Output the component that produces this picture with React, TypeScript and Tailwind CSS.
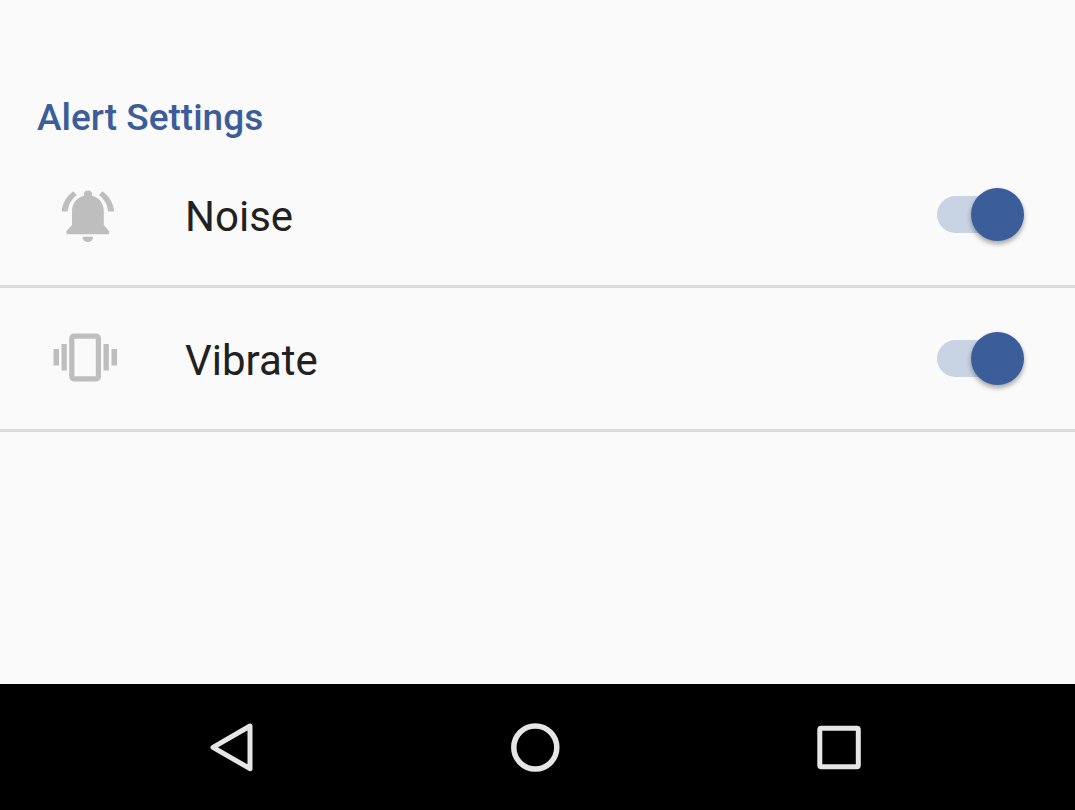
import { useState, type ReactNode } from "react";

function BellIcon() {
  return (
    <svg className="h-16 w-16 shrink-0" viewBox="0 1 64 64" fill="#bebebe" aria-hidden="true">
      <path d="M35 8.500a4 4 0 0 0-4 4v1.300C23.900 15.600 19 21.500 19 29V43L13.400 49.300V52.200H56.200V49.300L50.800 43V29C50.800 21.500 46.100 15.600 39 13.800V12.500a4 4 0 0 0-4-4z" />
      <path d="M29.500 54.700H40.200A5.350 5.350 0 0 1 29.500 54.700z" />
      <path d="M20.200 9.200 24 13C18.600 17 15.200 22.600 14.700 29.600H8.700C9.200 21.500 13.600 13.900 20.200 9.200z" />
      <path d="M49.600 9.200 45.800 13C51.200 17 54.600 22.600 55.100 29.600H61.100C60.600 21.500 56.200 13.900 49.600 9.200z" />
    </svg>
  );
}

function VibrateIcon() {
  return (
    <svg className="h-16 w-16 shrink-0" viewBox="0 0 64 64" fill="#bebebe" aria-hidden="true">
      <rect x="0.500" y="22" width="5.500" height="16.500" />
      <rect x="8.500" y="17" width="5.300" height="26.500" />
      <rect x="50.500" y="17" width="5.300" height="26.500" />
      <rect x="58.500" y="22" width="5.500" height="16.500" />
      <rect x="18.800" y="9.200" width="26.600" height="42.600" rx="2" fill="none" stroke="#bebebe" strokeWidth="5.200" />
    </svg>
  );
}

function SettingRow({ id, label, icon }: { id: string; label: string; icon: ReactNode }) {
  const [on, setOn] = useState(true);
  return (
    <li className="flex h-36 items-center border-b-[3px] border-[#dadada] pr-[51px] pl-[53px]">
      {icon}
      <label htmlFor={id} className="flex-1 cursor-pointer pt-1 pl-[68px] text-[42px] leading-[50px] text-[#212121]">
        {label}
      </label>
      <input
        id={id}
        type="checkbox"
        role="switch"
        checked={on}
        onChange={(e) => setOn(e.target.checked)}
        className="grid h-[53px] w-[87px] shrink-0 cursor-pointer appearance-none items-center before:col-start-1 before:row-start-1 before:h-[37px] before:w-[87px] before:rounded-full before:bg-[#d0d0d0] after:z-10 after:col-start-1 after:row-start-1 after:size-[53px] after:rounded-full after:bg-[#f1f1f1] after:shadow-[0_3px_5px_rgba(0,0,0,0.35)] checked:before:bg-[#c8d3e3] checked:after:justify-self-end checked:after:bg-[#3b5e9b]"
      />
    </li>
  );
}

export default function App() {
  return (
    <div className="flex min-h-screen flex-col bg-[#fafafa] font-[Roboto,sans-serif]">
      <main className="flex-1 pt-24">
        <h1 className="px-[37px] text-[37px] leading-[44px] font-medium text-[#3b5e9b]">Alert Settings</h1>
        <ul className="pt-1">
          <SettingRow id="noise" label="Noise" icon={<BellIcon />} />
          <SettingRow id="vibrate" label="Vibrate" icon={<VibrateIcon />} />
        </ul>
      </main>
      <nav className="flex h-[126px] items-center justify-center gap-[232px] bg-black pr-[5px]" aria-label="System navigation">
        <button type="button" aria-label="Back">
          <svg className="size-[72px]" viewBox="0 0 72 72" fill="none" stroke="#e6e6e6" strokeWidth="5" strokeLinejoin="round">
            <path d="M55 15V57.700L18 36.300z" />
          </svg>
        </button>
        <button type="button" aria-label="Home">
          <svg className="size-[72px]" viewBox="0 0 72 72" fill="none" stroke="#e6e6e6" strokeWidth="5.500">
            <circle cx="36.300" cy="36.500" r="21.500" />
          </svg>
        </button>
        <button type="button" aria-label="Recent apps">
          <svg className="size-[72px]" viewBox="0 0 72 72" fill="none" stroke="#e6e6e6" strokeWidth="5">
            <rect x="16.800" y="17.300" width="38.500" height="38.500" rx="1.500" />
          </svg>
        </button>
      </nav>
    </div>
  );
}
